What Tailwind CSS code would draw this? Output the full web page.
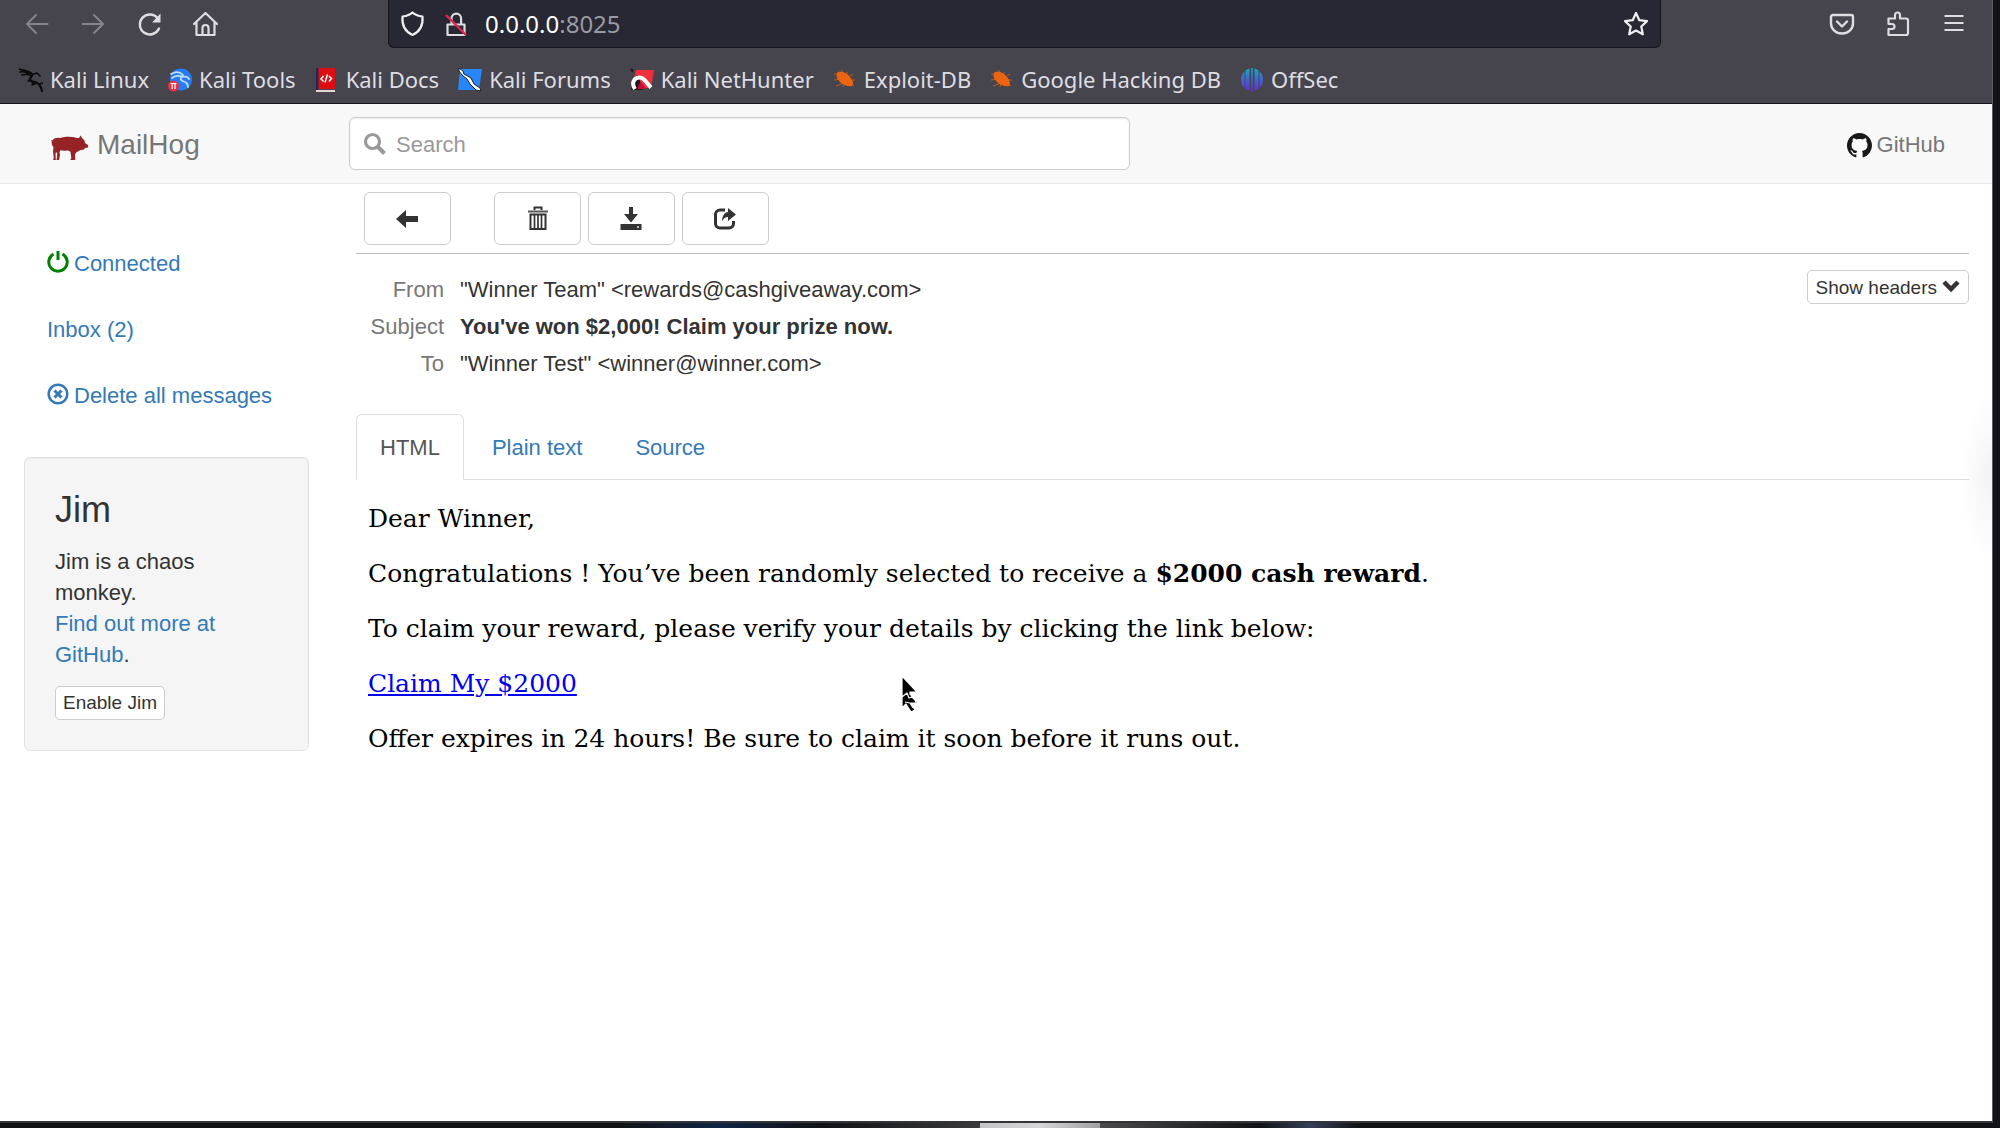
<!DOCTYPE html>
<html lang="en">
<head>
  <meta charset="UTF-8" />
  <meta name="viewport" content="width=device-width, initial-scale=1" />
  <title>MailHog</title>
  <script src="https://cdn.jsdelivr.net/npm/@tailwindcss/browser@4"></script>
</head>
<body class="bg-[#111215] font-['Liberation_Sans',Arial,sans-serif] text-[22px] leading-[31px] text-[#333]">

<div class="relative flex flex-col min-h-screen pr-[7px] pb-[5px]">
<div class="relative flex-1 flex flex-col bg-white border-r border-b-2 border-r-[#5b5a66] border-b-[#33333c]">

  <!-- Browser chrome -->
  <div class="bg-[#46454e] border-b border-[#16131c] font-['Noto_Sans',sans-serif] text-[#dedde2]">

    <!-- Address row -->
    <div class="grid grid-cols-[388px_1fr_331px] h-12">
      <div class="flex items-center gap-7 pl-[23px]">
        <button aria-label="Back" class="w-7 h-7 text-[#85848b]">
          <svg viewBox="0 0 28 28" class="w-7 h-7" fill="none" stroke="currentColor" stroke-width="2" stroke-linecap="round" stroke-linejoin="round"><path d="M24.500 14H4M13 5L4 14l9 9"/></svg>
        </button>
        <button aria-label="Forward" class="w-7 h-7 text-[#85848b]">
          <svg viewBox="0 0 28 28" class="w-7 h-7" fill="none" stroke="currentColor" stroke-width="2" stroke-linecap="round" stroke-linejoin="round"><path d="M3.500 14H24M15 5l9 9-9 9"/></svg>
        </button>
        <button aria-label="Reload" class="w-7 h-7">
          <svg viewBox="0 0 28 28" class="w-7 h-7" fill="none" stroke="currentColor" stroke-width="2.400" stroke-linecap="round"><path d="M24 18.500A10 10 0 1 1 22.500 8"/><path d="M25.500 3.500v9H17z" fill="currentColor" stroke="none"/></svg>
        </button>
        <button aria-label="Home" class="w-7 h-7">
          <svg viewBox="0 0 28 28" class="w-7 h-7" fill="none" stroke="currentColor" stroke-width="2.200" stroke-linecap="round" stroke-linejoin="round"><path d="M3 14L14.500 3 26 14M5.500 12v13h18V12M11.500 25v-7a3 3 0 0 1 6 0v7"/></svg>
        </button>
      </div>

      <div class="flex items-center bg-[#272833] border border-t-0 border-[#16131c] rounded-b-md pl-[10px] pr-[10px]">
        <svg viewBox="0 0 28 28" class="w-7 h-7 shrink-0" fill="none" stroke="#eeeef2" stroke-width="2.200" stroke-linejoin="round"><path d="M13.500 2.500c2.500 2.500 6 3.500 10 4 .8 9-2.500 15-10 18.500C6 21.500 2.700 15.500 3.500 6.500c4-.5 7.500-1.500 10-4z"/></svg>
        <svg viewBox="0 0 28 28" class="w-7 h-7 ml-4 shrink-0" fill="none" stroke="#dedde2" stroke-width="2.200" stroke-linejoin="round"><path d="M4.500 14.500h17V25h-17zM8.500 14V8.500a4.800 4.800 0 0 1 9.600 0V14"/><path d="M3 5l20 20" stroke="#e22850" stroke-width="2.400"/></svg>
        <div class="flex-1 ml-[14px] text-2xl text-white"><span>0.0.0.0</span><span class="text-[#9a9aa3]">:8025</span></div>
        <button aria-label="Bookmark this page" class="w-7 h-7">
          <svg viewBox="0 0 28 28" class="w-7 h-7" fill="none" stroke="#eeeef2" stroke-width="2.200" stroke-linejoin="round"><path d="M14 3l3.300 7.200 7.700.9-5.700 5.400 1.500 7.800L14 20.500l-6.800 3.800 1.500-7.800L3 11.100l7.700-.9z"/></svg>
        </button>
      </div>

      <div class="flex items-center justify-end gap-7 pr-[24px]">
        <button aria-label="Save to Pocket" class="w-7 h-7">
          <svg viewBox="0 0 28 28" class="w-7 h-7" fill="none" stroke="currentColor" stroke-width="2.400" stroke-linecap="round" stroke-linejoin="round"><path d="M5 5h18a2 2 0 0 1 2 2v6.500a11 10 0 0 1-22 0V7a2 2 0 0 1 2-2zM9 11.500l5 5 5-5"/></svg>
        </button>
        <button aria-label="Extensions" class="w-7 h-7">
          <svg viewBox="0 0 28 28" class="w-7 h-7" fill="none" stroke="currentColor" stroke-width="2.200" stroke-linejoin="round"><path d="M4.500 8.500H11V5a2.500 2.500 0 0 1 5 0v3.500h6a2 2 0 0 1 2 2V23a2 2 0 0 1-2 2H4.500v-6H8a2.500 2.500 0 0 0 0-5H4.500z"/></svg>
        </button>
        <button aria-label="Open application menu" class="w-7 h-7">
          <svg viewBox="0 0 28 28" class="w-7 h-7" stroke="currentColor" stroke-width="2"><path d="M4.500 6h19M4.500 13h19M4.500 20h19"/></svg>
        </button>
      </div>
    </div>

    <!-- Bookmarks -->
    <nav class="flex items-center gap-[19px] h-[55px] pt-2 pl-[19px] whitespace-nowrap">
      <a href="#" class="flex items-center gap-[7px]">
        <svg viewBox="0 0 24 24" class="w-6 h-6" fill="none" stroke="#0b0b0d" stroke-linecap="round" stroke-linejoin="round"><path d="M0 1c3 2 7 0 11 4M1 4c4-1 7 0 9 2M3 7c3-1 5-1 8 0" stroke-width="1.800"/><path d="M10 4c3 1 4 3 2 5-3 3 0 5 4 5 4 1 6 4 7 9" stroke-width="2.200"/><path d="M12 7l6-2 3 3M12 12l-3 1M15 14l-2 3 5-2M20 16l4-1" stroke-width="1.500"/></svg>
        Kali Linux
      </a>
      <a href="#" class="flex items-center gap-[7px]">
        <svg viewBox="0 0 24 24" class="w-6 h-6"><circle cx="13" cy="11.500" r="11" fill="#267cf5"/><path d="M3 6c5-3 9-2 12 1M4 10c4-3 8-2 10-1 4-1 6 0 7 2M14 8c-3 4 0 5 3 6 2 1 3 3 3 5" fill="none" stroke="#bcdcff" stroke-width="1.800" stroke-linecap="round"/><circle cx="5.500" cy="18" r="5.500" fill="#ed3040"/><path d="M2.500 15.500h6M4.200 15.500V21M7 15.500V21" stroke="#fff" stroke-width="1.200"/></svg>
        Kali Tools
      </a>
      <a href="#" class="flex items-center gap-[7px]">
        <svg viewBox="0 0 24 24" class="w-6 h-6"><path d="M1 0h19v21H1z" fill="#dd0e13"/><path d="M1 0h2.500v22H1z" fill="#27264f"/><path d="M1 22h19v2H1z" fill="#e8d4d4"/><path d="M8.500 8L6 11l2.500 2.500M14 8l2.500 2.500L14 13.500M12.500 6.500l-2.500 8" fill="none" stroke="#fff" stroke-width="1.500"/></svg>
        Kali Docs
      </a>
      <a href="#" class="flex items-center gap-[7px]">
        <svg viewBox="0 0 24 24" class="w-6 h-6"><path d="M2 1h22l-3 21H0z" fill="#2787fa"/><path d="M1 0l4 3 1 3 7 4 3 6 6 4 1 3-5-1-6-6-3-5-5-4-3-4z" fill="#fff" stroke="#18202c" stroke-width="1"/></svg>
        Kali Forums
      </a>
      <a href="#" class="flex items-center gap-[7px]">
        <svg viewBox="0 0 24 24" class="w-6 h-6"><path d="M6 2h18l-3 18H2z" fill="#ee303c"/><path d="M0 0l4 2-2 3zM1 22l2-11 5-4 5 15z" fill="#23141b"/><path d="M5 21C1 15 4 10 9 9.500c5-.5 8 6 12 10" fill="none" stroke="#fff" stroke-width="4"/><path d="M8 21c0-5 2-7 4-6l4 6z" fill="#c5103a"/></svg>
        Kali NetHunter
      </a>
      <a href="#" class="flex items-center gap-[7px]">
        <svg viewBox="0 0 24 24" class="w-6 h-6" fill="#ec6410" stroke="#ec6410"><path d="M5 4c5-1 9 1 12 5 3 4 4 7 2 9-4 1-9-1-12-4-3-3-5-7-2-10z" stroke="none"/><path d="M1 6h7M1 12l8-1M3 18l8-3M8 2l4 5M14 4l-1 5M17 8l3-2M18 12h4M17 15l4 3M11 15l-1 4" stroke-width=".7" fill="none"/></svg>
        Exploit-DB
      </a>
      <a href="#" class="flex items-center gap-[7px]">
        <svg viewBox="0 0 24 24" class="w-6 h-6" fill="#ec6410" stroke="#ec6410"><path d="M5 4c5-1 9 1 12 5 3 4 4 7 2 9-4 1-9-1-12-4-3-3-5-7-2-10z" stroke="none"/><path d="M1 6h7M1 12l8-1M3 18l8-3M8 2l4 5M14 4l-1 5M17 8l3-2M18 12h4M17 15l4 3M11 15l-1 4" stroke-width=".7" fill="none"/></svg>
        Google Hacking DB
      </a>
      <a href="#" class="flex items-center gap-[7px]">
        <svg viewBox="0 0 24 24" class="w-6 h-6"><defs><linearGradient id="offsec" x1="0" y1="0" x2="0" y2="1"><stop offset="0" stop-color="#18a5c4"/><stop offset="1" stop-color="#6a27d8"/></linearGradient></defs><path d="M4.500 3.500v17A12 12 0 0 1 4.500 3.500zM5.500 2.500a12 12 0 0 1 4-2v22a12 12 0 0 1-4-2zM11.200 0h1.600v24h-1.600zM14.500 .5a12 12 0 0 1 4 2v18a12 12 0 0 1-4 2zM19.500 3.500a12 12 0 0 1 0 17z" fill="url(#offsec)"/></svg>
        OffSec
      </a>
    </nav>
  </div>

  <!-- MailHog navbar -->
  <header class="flex items-center h-20 bg-[#f8f8f8] border-b border-[#e7e7e7] text-[#777]">
    <a href="#" class="flex items-center gap-[9px] w-[349px] pt-[2px] pl-[50px] text-[28px]">
      <svg viewBox="0 0 38 25" class="w-[38px] h-[25px] mt-1.5" fill="#952225"><path d="M1 5c0 0 1 .5 1.500.500C4 3 7 2.500 10 3c5-1.500 11-2 17 0l2 0 1.500-2.500 1.800 2.700 2.200 2.300.5 2.500 3 2v2.500l-3 .5-1 1.500-4 .8-3.500 2-1.500 2 .3 6H20l1.300-2-.8-6.500-3-1.500c-2 .8-5 .5-7 0L9.500 17l.5 3-1 5H6.500l.8-6.500L6 17l-.5 2 .3 6H3l.8-2L3 17l.5-5C2 11 1.500 8 1.800 7z"/></svg>
      MailHog
    </a>
    <div class="relative w-[781px]">
      <svg viewBox="0 0 24 24" class="absolute left-[14px] top-[15px] w-6 h-6" fill="none" stroke="#999"><circle cx="9.500" cy="9.500" r="7" stroke-width="3.200"/><path d="M15 15l6.500 6.500" stroke-width="4"/></svg>
      <input type="text" aria-label="Search" placeholder="Search" class="w-full h-[53px] pt-[2px] pl-[46px] pr-4 bg-white border border-[#ccc] rounded-md shadow-[inset_0_1px_2px_rgba(0,0,0,0.08)] placeholder:text-[#999]" />
    </div>
    <a href="#" class="flex items-center gap-[5px] ml-auto pt-[2px] pr-[47px]">
      <svg viewBox="0 0 16 16" class="w-[25px] h-[25px] mt-0.5" fill="#191717"><path d="M8 0C3.580 0 0 3.580 0 8c0 3.540 2.290 6.530 5.470 7.590.4.070.55-.17.55-.38 0-.19-.01-.82-.01-1.490-2.010.37-2.530-.49-2.690-.94-.09-.23-.48-.94-.82-1.130-.28-.15-.68-.52-.01-.53.63-.01 1.080.58 1.230.82.72 1.210 1.870.87 2.330.66.07-.52.28-.87.51-1.070-1.780-.2-3.640-.89-3.640-3.950 0-.87.31-1.590.82-2.150-.08-.2-.36-1.020.08-2.120 0 0 .67-.21 2.200.82.64-.18 1.320-.27 2-.27s1.360.09 2 .27c1.530-1.040 2.200-.82 2.200-.82.44 1.100.16 1.920.08 2.120.51.56.82 1.270.82 2.150 0 3.070-1.870 3.750-3.650 3.950.29.25.54.73.54 1.480 0 1.070-.01 1.930-.01 2.200 0 .21.15.46.55.38A8.010 8.010 0 0 0 16 8c0-4.420-3.580-8-8-8z"/></svg>
      GitHub
    </a>
  </header>

  <div class="grid grid-cols-[356px_1fr] pr-[23px]">

    <!-- Sidebar -->
    <aside class="pt-12 pl-6 pr-[47px] text-[#337ab7]">
      <nav class="flex flex-col gap-[3px] whitespace-nowrap">
        <a href="#" class="flex items-center gap-[5px] py-4 pl-[23px]">
          <svg viewBox="0 0 22 22" class="w-[22px] h-[22px] -mt-1" fill="none" stroke="green" stroke-width="3"><path d="M6.500 3A9.200 9.200 0 1 0 15.500 3M11 0v9"/></svg>
          Connected
        </a>
        <a href="#" class="py-4 pl-[23px]">Inbox (2)</a>
        <a href="#" class="flex items-center gap-[5px] py-4 pl-[23px]">
          <svg viewBox="0 0 22 22" class="w-[22px] h-[22px] -mt-1" fill="none" stroke="currentColor"><circle cx="11" cy="11" r="9.300" stroke-width="2.600"/><path d="M7.500 7.500l7 7M14.500 7.500l-7 7" stroke-width="3"/></svg>
          Delete all messages
        </a>
      </nav>

      <div class="mt-[30px] p-[30px] bg-[#f5f5f5] border border-[#e3e3e3] rounded-md shadow-[inset_0_1px_1px_rgba(0,0,0,0.05)] text-[#333]">
        <h3 class="pt-[2px] text-4xl leading-10">Jim</h3>
        <p class="mt-4">Jim is a chaos monkey.<br /><a href="#" class="text-[#337ab7]">Find out more at GitHub</a>.</p>
        <button class="mt-4 h-[34px] px-[7px] bg-white border border-[#ccc] rounded-[5px] text-[19px] leading-8">Enable Jim</button>
      </div>
    </aside>

    <main>
      <!-- Message actions -->
      <div class="flex gap-[7px] pt-2 pb-2 pl-2 border-b border-[#bbb]">
        <button aria-label="Back to inbox" class="flex items-center justify-center w-[87px] h-[53px] mr-9 border border-[#ccc] rounded-md">
          <svg viewBox="0 0 24 24" class="w-6 h-6" fill="#333"><path d="M0 12l10-9v6h12v6H10v6z"/></svg>
        </button>
        <button aria-label="Delete" class="flex items-center justify-center w-[87px] h-[53px] border border-[#ccc] rounded-md">
          <svg viewBox="0 0 24 26" class="w-6 h-[26px]" fill="none" stroke="#333"><path d="M8.500 4V1.500h7V4" stroke-width="2"/><path d="M2 5.500h20" stroke="#555" stroke-width="2"/><path d="M4.500 8.500h15V23h-15z" stroke-width="2"/><path d="M8.500 8v15M12 8v15M15.500 8v15" stroke-width="1.700"/></svg>
        </button>
        <button aria-label="Download" class="flex items-center justify-center w-[87px] h-[53px] border border-[#ccc] rounded-md">
          <svg viewBox="0 0 24 24" class="w-6 h-6" fill="#333"><path d="M9 0h4v7h5l-7 8.500L4 7h5zM.5 17h21v6H.5z"/><path d="M17 19h2v2h-2z" fill="#bbb"/></svg>
        </button>
        <button aria-label="Release" class="flex items-center justify-center w-[87px] h-[53px] border border-[#ccc] rounded-md">
          <svg viewBox="0 0 24 24" class="w-6 h-6" fill="#333"><path d="M11 3H6a4.500 4.500 0 0 0-4.500 4.500v9A4.500 4.500 0 0 0 6 21h9a4.500 4.500 0 0 0 4.500-4.500V14" fill="none" stroke="#333" stroke-width="3"/><path d="M14 1l8 6.500-8 6.500v-4c-3 0-4.500 1.500-6 4.500 0-5 2-9 6-9.500z"/></svg>
        </button>
      </div>

      <div class="flex items-start justify-between pt-4">
        <table class="mt-px whitespace-nowrap">
          <tbody>
            <tr>
              <th class="w-[88px] py-[3px] font-normal text-right text-[#777]">From</th>
              <td class="py-[3px] pl-4">"Winner Team" &lt;rewards@cashgiveaway.com&gt;</td>
            </tr>
            <tr>
              <th class="py-[3px] font-normal text-right text-[#777]">Subject</th>
              <td class="py-[3px] pl-4 font-bold">You've won $2,000! Claim your prize now.</td>
            </tr>
            <tr>
              <th class="py-[3px] font-normal text-right text-[#777]">To</th>
              <td class="py-[3px] pl-4">"Winner Test" &lt;winner@winner.com&gt;</td>
            </tr>
          </tbody>
        </table>
        <button class="flex items-center gap-[5px] h-[34px] px-2 border border-[#ccc] rounded-[5px] text-[19px] whitespace-nowrap">
          Show headers
          <svg viewBox="0 0 18 18" class="w-[18px] h-[18px]" fill="none" stroke="#333" stroke-width="4.500"><path d="M2 4l7 7 7-7"/></svg>
        </button>
      </div>

      <!-- Tabs -->
      <div class="flex gap-[3px] mt-8 border-b border-[#ddd] text-[#337ab7]">
        <button class="-mb-px pt-[17px] pb-4 px-[23px] bg-white border border-[#ddd] border-b-white rounded-t-md text-[#555]">HTML</button>
        <button class="-mb-px pt-[17px] pb-4 px-6 border border-transparent">Plain text</button>
        <button class="-mb-px pt-[17px] pb-4 px-6 border border-transparent">Source</button>
      </div>

      <!-- Message body -->
      <article class="flex flex-col gap-[25px] pt-6 pl-3 font-['DejaVu_Serif',serif] text-[25px] leading-[30px] text-black">
        <p>Dear Winner,</p>
        <p>Congratulations ! You’ve been randomly selected to receive a <strong>$2000 cash reward</strong>.</p>
        <p>To claim your reward, please verify your details by clicking the link below:</p>
        <p><a href="#" class="text-[#0000ee] underline">Claim My $2000</a></p>
        <p>Offer expires in 24 hours! Be sure to claim it soon before it runs out.</p>
      </article>
    </main>
  </div>

  <!-- Soft glow at the right edge -->
  <div class="absolute right-0 top-[390px] w-8 h-44 bg-radial-[at_100%_50%] from-black/5 to-transparent to-70%"></div>

  <!-- Mouse pointer -->
  <svg viewBox="0 0 22 38" class="absolute left-[900px] top-[675px] w-[22px] h-[38px]" fill="#000" stroke="#fff" stroke-width="1.200" stroke-linejoin="round"><path d="M2 14v19l4-4 5 8 4-2-4-7h8z"/><path d="M2 1v21l5-4 2 5 3-1-2-5h7z"/><path d="M9 19h10l-5 2 3 10M5 27l5 1 3 5M10 17l2 5" fill="none"/></svg>
</div>

<!-- Sliver of the desktop under the window -->
<div class="absolute inset-x-0 bottom-0 h-[5px] flex">
  <div class="w-[31%]"></div>
  <div class="w-[10%] bg-linear-to-r from-[#111215] via-[#0f2448] to-[#111215]"></div>
  <div class="w-[8%] bg-linear-to-r from-[#111215] to-[#3a3a3a]"></div>
  <div class="w-[6%] bg-linear-to-r from-[#c4c4c4] via-[#d6d6d6] to-[#a0a0a0]"></div>
  <div class="w-[8%] bg-linear-to-r from-[#4a4a4a] to-[#111215]"></div>
  <div class="w-[5%] bg-linear-to-r from-[#111215] via-[#35405a] to-[#111215]"></div>
</div>
</div>

</body>
</html>
